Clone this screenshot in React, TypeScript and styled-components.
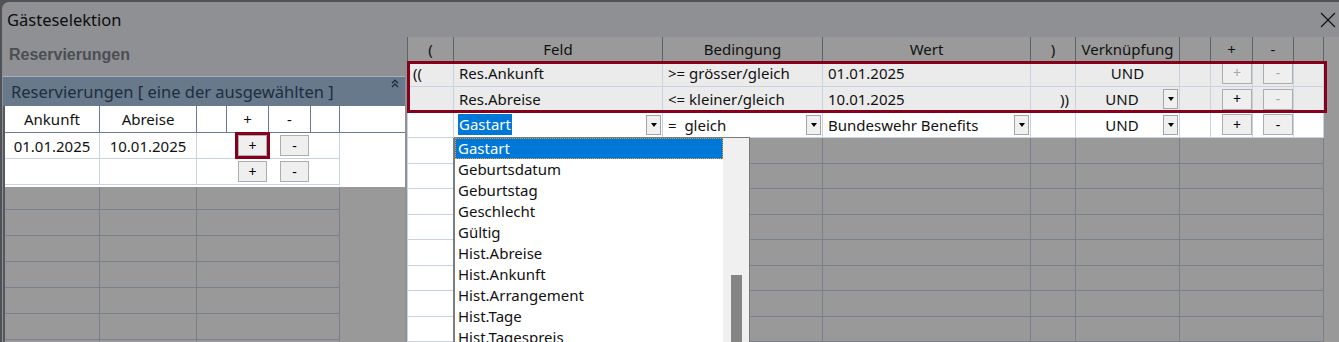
import React from "react";
import styled, { createGlobalStyle, css } from "styled-components";

const GlobalStyle = createGlobalStyle`
  html, body {
    margin: 0;
    padding: 0;
    height: 342px;
    overflow: hidden;
  }
  body {
    background: #4f5256;
    font-family: "Noto Sans", "Open Sans", sans-serif;
    color: #111;
  }
`;

const HL_LINE = "#c8d3e2";
const DIM_LINE = "#78808b";
const HEAD_LINE = "#5a626e";
const LEFT_HEAD_LINE = "#6a7a90";

const Window = styled.div`
  margin: 2px 0 0 2px;
  height: 340px;
  display: flex;
  flex-direction: column;
  background: #8f9094;
  border-top-left-radius: 7px;
  overflow: hidden;
`;

const TitleBar = styled.div`
  height: 35px;
  flex: none;
  display: flex;
  align-items: center;
  justify-content: space-between;
  padding: 0 3px 0 5px;
`;

const Title = styled.span`
  font-size: 16.5px;
  color: #0d0d0d;
`;

const CloseButton = styled.button`
  border: 0;
  background: none;
  padding: 0;
  width: 16px;
  height: 16px;
  display: flex;
`;

const Body = styled.div`
  flex: 1;
  display: flex;
  min-height: 0;
`;

/* ---------- left panel ---------- */

const LeftPanel = styled.div`
  width: 403px;
  flex: none;
  display: flex;
  flex-direction: column;
`;

const SectionTitle = styled.div`
  height: 39px;
  flex: none;
  box-sizing: border-box;
  display: flex;
  align-items: center;
  padding: 0 0 4px 7px;
  font-family: "Liberation Sans", Arial, sans-serif;
  font-weight: 700;
  font-size: 16px;
  color: #4b4e53;
`;

const GroupHeader = styled.div`
  height: 30px;
  flex: none;
  box-sizing: border-box;
  display: flex;
  justify-content: space-between;
  align-items: center;
  padding: 0 6px 0 8px;
  margin-left: 1px;
  border-top: 1px solid #a6b0bc;
  background: #68798c;
  color: #1e2d3e;
  font-size: 16.5px;
`;

const CollapseIcon = styled.svg`
  align-self: flex-start;
  margin-top: 2px;
`;

const TableArea = styled.div`
  flex: 1;
  margin-left: 1px;
  border-left: 2px solid #55585e;
  background: #999;
  display: flex;
  flex-direction: column;
`;

const WhiteBlock = styled.div`
  background: #fff;
  padding-bottom: 2px;
`;

const LRow = styled.div<{ $cols: string; $h: number }>`
  display: grid;
  grid-template-columns: ${(p) => p.$cols};
  height: ${(p) => p.$h}px;
`;

const LCell = styled.div<{ $line?: string; $r?: boolean; $b?: boolean; $start?: boolean }>`
  display: flex;
  align-items: center;
  justify-content: ${(p) => (p.$start ? "flex-start" : "center")};
  box-sizing: border-box;
  font-size: 15px;
  color: #111;
  ${(p) => p.$r && css`border-right: 1px solid ${p.$line};`}
  ${(p) => p.$b && css`border-bottom: 1px solid ${p.$line};`}
`;

const Actions = styled.div`
  display: flex;
  align-items: center;
  gap: 13px;
  padding-left: 41px;
`;

const Spotlight = styled.div`
  display: flex;
  margin: -3px;
  border: 3px solid #85001a;
`;

const SmallButton = styled.button<{ $w?: number }>`
  width: ${(p) => p.$w ?? 30}px;
  height: 21px;
  padding: 0;
  box-sizing: border-box;
  border: 1px solid #adadad;
  background: #efefef;
  font-family: "Noto Sans", sans-serif;
  font-size: 14px;
  line-height: 1;
  color: #000;
  display: flex;
  align-items: center;
  justify-content: center;

  &:disabled {
    color: #a8a8a8;
  }
`;

/* ---------- right grid ---------- */

const GRID_COLS = "46px 209px 160px 208px 45px 104px 31px 42px 41px 31px";
const DIM_COLS = "46px 209px 160px 208px 45px 104px 145px";

const GridPanel = styled.div`
  flex: 1;
  margin-left: 2px;
  background: #999;
  display: flex;
  flex-direction: column;
`;

const GridRow = styled.div<{ $cols: string; $h: number }>`
  display: grid;
  grid-template-columns: ${(p) => p.$cols};
  width: 917px;
  height: ${(p) => p.$h}px;
`;

type Tone = "head" | "hl" | "white" | "dim" | "dimLight";

const toneBg: Record<Tone, string> = {
  head: "#9a9a9a",
  hl: "#ebebeb",
  white: "#fff",
  dim: "#999",
  dimLight: "#fff",
};

const toneLine: Record<Tone, string> = {
  head: HEAD_LINE,
  hl: HL_LINE,
  white: HL_LINE,
  dim: DIM_LINE,
  dimLight: HL_LINE,
};

const GCell = styled.div<{ $tone: Tone; $align?: "left" | "center" | "right"; $last?: boolean }>`
  position: relative;
  display: flex;
  align-items: center;
  justify-content: ${(p) =>
    p.$align === "left" ? "flex-start" : p.$align === "right" ? "flex-end" : "center"};
  box-sizing: border-box;
  padding: ${(p) => (p.$align === "right" ? "0 6px 0 0" : p.$align === "left" ? "0 5px" : "0")};
  background: ${(p) => toneBg[p.$tone]};
  border-left: 1px solid ${(p) => toneLine[p.$tone]};
  ${(p) => p.$tone !== "head" && css`border-bottom: 1px solid ${toneLine[p.$tone]};`}
  ${(p) => p.$last && css`border-right: 1px solid ${toneLine[p.$tone]};`}
  font-size: 15px;
  color: #111;
  white-space: pre;
`;

const BtnCell = styled(GCell)`
  justify-content: flex-end;
  padding: 0;
`;

const HighlightGroup = styled.div`
  position: relative;
  align-self: flex-start;

  &::after {
    content: "";
    position: absolute;
    top: 0;
    left: 0;
    right: -3px;
    bottom: 0;
    border: 3px solid #85001a;
    pointer-events: none;
  }
`;

const ComboCell = styled(GCell)`
  justify-content: space-between;
  padding: 0 1px 0 5px;
`;

const LinkText = styled.span`
  flex: 1;
  text-align: center;
`;

const ComboArrow = styled.span`
  width: 15px;
  height: 20px;
  flex: none;
  box-sizing: border-box;
  border: 1px solid #a5a5a5;
  background: #f0f0f0;
  display: flex;
  justify-content: center;
  padding-top: 7px;

  &::after {
    content: "";
    width: 0;
    height: 0;
    border-left: 3.5px solid transparent;
    border-right: 3.5px solid transparent;
    border-top: 4px solid #000;
  }
`;

const Selected = styled.span`
  background: #0078d7;
  color: #fff;
  height: 21px;
  line-height: 21px;
  padding: 0 1px;
  margin-left: -1px;
`;

const DropList = styled.div`
  position: absolute;
  top: 24px;
  left: 0;
  width: 296px;
  height: 215px;
  box-sizing: border-box;
  border: 1px solid #7a7a7a;
  background: #fff;
  display: flex;
  z-index: 5;
`;

const ListItems = styled.ul`
  margin: 0;
  padding: 0;
  list-style: none;
  flex: 1;
`;

const ListItem = styled.li<{ $selected?: boolean }>`
  height: 21px;
  line-height: 21px;
  padding-left: 3px;
  font-size: 15px;
  color: #111;
  ${(p) =>
    p.$selected &&
    css`
      background: #0078d7;
      color: #fff;
      outline: 1px dotted #f0a030;
      outline-offset: -1px;
    `}
`;

const ScrollTrack = styled.div`
  width: 26px;
  flex: none;
  background: #f0f0f0;
  display: flex;
  flex-direction: column;
  box-sizing: border-box;
  padding: 137px 0 0 8px;
`;

const ScrollThumb = styled.div`
  flex: 1;
  width: 11px;
  background: #858585;
`;

const fields = [
  "Gastart",
  "Geburtsdatum",
  "Geburtstag",
  "Geschlecht",
  "Gültig",
  "Hist.Abreise",
  "Hist.Ankunft",
  "Hist.Arrangement",
  "Hist.Tage",
  "Hist.Tagespreis",
];

const conditions = [
  {
    open: "((",
    field: "Res.Ankunft",
    op: ">= grösser/gleich",
    value: "01.01.2025",
    close: "",
    combo: false,
    plusOff: true,
  },
  {
    open: "",
    field: "Res.Abreise",
    op: "<= kleiner/gleich",
    value: "10.01.2025",
    close: "))",
    combo: true,
    plusOff: false,
  },
];

const LEFT_COLS = "95px 97px 30px 42px 42px 29px 1fr";
const LEFT_ROW_COLS = "95px 97px 143px 1fr";

function App() {
  return (
    <>
      <GlobalStyle />
      <Window>
        <TitleBar>
          <Title>Gästeselektion</Title>
          <CloseButton aria-label="Schließen">
            <svg width="16" height="16" viewBox="0 0 16 16">
              <path d="M1 1 L15 15 M15 1 L1 15" stroke="#111" strokeWidth="1.2" fill="none" />
            </svg>
          </CloseButton>
        </TitleBar>

        <Body>
          <LeftPanel>
            <SectionTitle>Reservierungen</SectionTitle>
            <GroupHeader>
              <span>Reservierungen [ eine der ausgewählten ]</span>
              <CollapseIcon width="8" height="9" viewBox="0 0 8 9">
                <path d="M1 4.2 L4 1.2 L7 4.2 M1 8 L4 5 L7 8" fill="none" stroke="#1e2d3e" strokeWidth="1.3" />
              </CollapseIcon>
            </GroupHeader>

            <TableArea>
              <WhiteBlock>
                <LRow $cols={LEFT_COLS} $h={27}>
                  <LCell $line={LEFT_HEAD_LINE} $r $b>Ankunft</LCell>
                  <LCell $line={LEFT_HEAD_LINE} $r $b>Abreise</LCell>
                  <LCell $line={LEFT_HEAD_LINE} $r $b />
                  <LCell $line={LEFT_HEAD_LINE} $r $b>+</LCell>
                  <LCell $line={LEFT_HEAD_LINE} $r $b>-</LCell>
                  <LCell $line={LEFT_HEAD_LINE} $r $b />
                  <LCell $line={LEFT_HEAD_LINE} $b />
                </LRow>
                <LRow $cols={LEFT_ROW_COLS} $h={26}>
                  <LCell $line={HL_LINE} $r $b>01.01.2025</LCell>
                  <LCell $line={HL_LINE} $r $b>10.01.2025</LCell>
                  <LCell $line={HL_LINE} $r $b $start>
                    <Actions>
                      <Spotlight>
                        <SmallButton $w={29}>+</SmallButton>
                      </Spotlight>
                      <SmallButton $w={29}>-</SmallButton>
                    </Actions>
                  </LCell>
                  <LCell />
                </LRow>
                <LRow $cols={LEFT_ROW_COLS} $h={26}>
                  <LCell $line={HL_LINE} $r $b />
                  <LCell $line={HL_LINE} $r $b />
                  <LCell $line={HL_LINE} $r $b $start>
                    <Actions>
                      <SmallButton $w={29}>+</SmallButton>
                      <SmallButton $w={29}>-</SmallButton>
                    </Actions>
                  </LCell>
                  <LCell />
                </LRow>
              </WhiteBlock>
              {[23, 26, 26, 26, 26, 26, 26].map((h, i) => (
                <LRow key={i} $cols={LEFT_ROW_COLS} $h={h}>
                  <LCell $line={DIM_LINE} $r $b />
                  <LCell $line={DIM_LINE} $r $b />
                  <LCell $line={DIM_LINE} $r $b />
                  <LCell />
                </LRow>
              ))}
            </TableArea>
          </LeftPanel>

          <GridPanel>
            <GridRow $cols={GRID_COLS} $h={24}>
              {["(", "Feld", "Bedingung", "Wert", ")", "Verknüpfung", "", "+", "-", ""].map((t, i) => (
                <GCell key={i} $tone="head" $last={i === 9}>
                  {t}
                </GCell>
              ))}
            </GridRow>

            <HighlightGroup>
              {conditions.map((c) => (
                <GridRow key={c.field} $cols={GRID_COLS} $h={26}>
                  <GCell $tone="hl" $align="left">{c.open}</GCell>
                  <GCell $tone="hl" $align="left">{c.field}</GCell>
                  <GCell $tone="hl" $align="left">{c.op}</GCell>
                  <GCell $tone="hl" $align="left">{c.value}</GCell>
                  <GCell $tone="hl" $align="right">{c.close}</GCell>
                  {c.combo ? (
                    <ComboCell $tone="hl">
                      <LinkText>UND</LinkText>
                      <ComboArrow />
                    </ComboCell>
                  ) : (
                    <GCell $tone="hl">UND</GCell>
                  )}
                  <GCell $tone="hl" />
                  <BtnCell $tone="hl">
                    <SmallButton disabled={c.plusOff}>+</SmallButton>
                  </BtnCell>
                  <BtnCell $tone="hl">
                    <SmallButton disabled>-</SmallButton>
                  </BtnCell>
                  <GCell $tone="hl" $last />
                </GridRow>
              ))}
            </HighlightGroup>

            <GridRow $cols={GRID_COLS} $h={26}>
              <GCell $tone="white" />
              <ComboCell $tone="white">
                <Selected>Gastart</Selected>
                <ComboArrow />
                <DropList>
                  <ListItems>
                    {fields.map((f, i) => (
                      <ListItem key={f} $selected={i === 0}>
                        {f}
                      </ListItem>
                    ))}
                  </ListItems>
                  <ScrollTrack>
                    <ScrollThumb />
                  </ScrollTrack>
                </DropList>
              </ComboCell>
              <ComboCell $tone="white">
                <span>{"=  gleich"}</span>
                <ComboArrow />
              </ComboCell>
              <ComboCell $tone="white">
                <span>Bundeswehr Benefits</span>
                <ComboArrow />
              </ComboCell>
              <GCell $tone="white" />
              <ComboCell $tone="white">
                <LinkText>UND</LinkText>
                <ComboArrow />
              </ComboCell>
              <GCell $tone="white" />
              <BtnCell $tone="white">
                <SmallButton>+</SmallButton>
              </BtnCell>
              <BtnCell $tone="white">
                <SmallButton>-</SmallButton>
              </BtnCell>
              <GCell $tone="white" $last />
            </GridRow>

            {Array.from({ length: 8 }).map((_, i) => (
              <GridRow key={i} $cols={DIM_COLS} $h={26}>
                <GCell $tone="dimLight" />
                <GCell $tone="dim" />
                <GCell $tone="dim" />
                <GCell $tone="dim" />
                <GCell $tone="dim" />
                <GCell $tone="dim" />
                <GCell $tone="dim" $last />
              </GridRow>
            ))}
          </GridPanel>
        </Body>
      </Window>
    </>
  );
}

export default App;
